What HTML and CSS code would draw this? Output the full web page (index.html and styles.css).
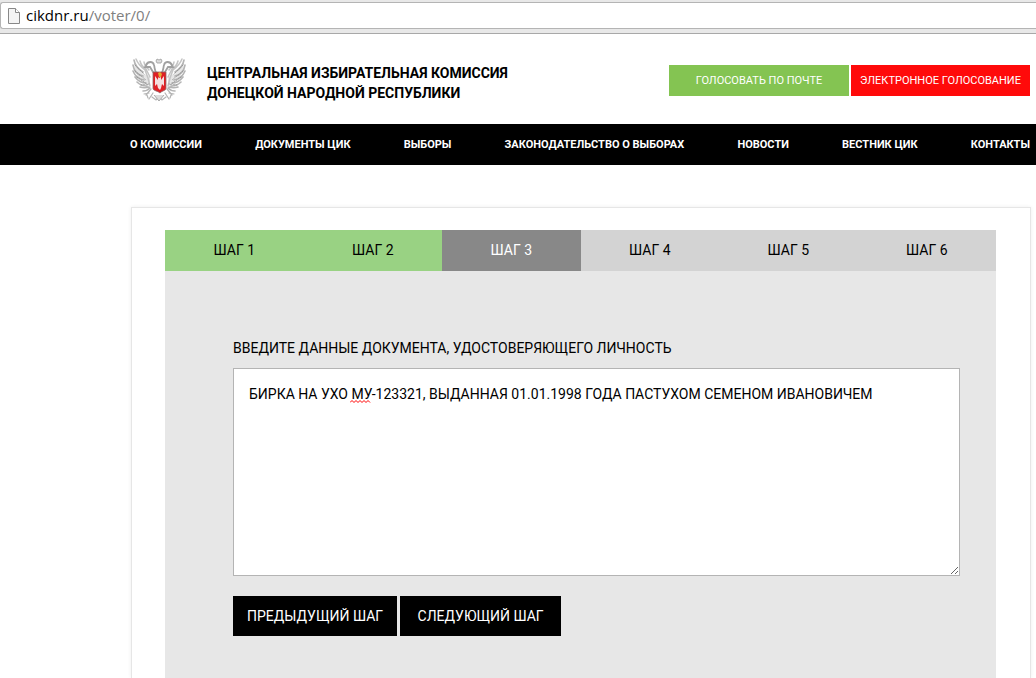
FILE: index.html
```
<!DOCTYPE html>
<html lang="ru">
<head>
  <meta charset="utf-8">
  <meta name="viewport" content="width=device-width">
  <title>ЦИК ДНР</title>
  <link rel="stylesheet" href="styles.css">
</head>
<body>
  <div class="browser-bar">
    <div class="address">
      <svg class="page-icon" width="12" height="16" viewBox="0 0 12 16" aria-hidden="true">
        <path d="M.5 .5h7l4 4v11H.5z" fill="#f4f4f4" stroke="#888"/>
        <path d="M7.500 .5v4h4" fill="#fff" stroke="#888"/>
      </svg>
      <span class="url"><span class="host">cikdnr.ru</span>/voter/0/</span>
    </div>
  </div>

  <header class="header">
    <div class="brand">
      <svg class="emblem" width="54" height="46" viewBox="0 0 54 46" aria-hidden="true">
        <g id="wing" fill="none" stroke="#b4b4b4" stroke-linecap="round">
          <path d="M18 28C9 27 3 20 2 4c3 8 9 13 16 16z" fill="#e6e6e6" stroke="none"/>
          <path d="M2 3c1 6 4 9 9 12M1 8c1 6 5 10 10 11M1 14c2 5 6 8 11 9M3 20c3 4 6 6 11 6M5 25c3 3 6 4 10 4M8 30c3 1 6 1 9 0M11 34c3 0 5-1 7-3" stroke-width="1.600"/>
          <path d="M4 2c2 5 5 8 9 11l3 8 2 8M8 4c1 4 3 6 6 8l4 8M12 5c0 4 3 5 5 8" stroke="#c4c4c4" stroke-width="1.500"/>
          <path d="M3 8l9 9M3 14l11 9M5 20l11 8M9 28l8-1" stroke="#888" stroke-width=".7" stroke-dasharray="1 1.500"/>
          <path d="M14 8c2-4 7-4 8 0 1 3 0 5 3 9M15 7l-2 3 5 0 3 5" stroke="#a0a0a0" stroke-width="1.800"/>
          <path d="M19 32l-5 6M17 36l-5 1M15 38l1 3M21 36l-4 6M20 40l4 3 3-4" stroke="#b4b4b4" stroke-width="1.200"/>
        </g>
        <use href="#wing" transform="translate(54 0) scale(-1 1)"/>
        <path d="M24 4l1-2 2 1 2-1 1 2-1 2h-4z" fill="#ddd" stroke="#999" stroke-width=".8"/>
        <path d="M22 38l5 6 5-6" fill="#ddd" stroke="#aaa"/>
        <path d="M21 15h13v16c0 3-3 2-6 5-4-3-7-2-7-5z" fill="#e01f24" stroke="#8b6b6b" stroke-width=".8"/>
        <path d="M23 19l3 4v-3l1 1 2-1v3l3-4v10l-2-2-1 4-1 2-2-2-1-4-2 2z" fill="#f4dede"/>
        <path d="M26 16l2-1 2 2-1 3h-2z" fill="#e2a832"/>
      </svg>
      <div class="brand-name">ЦЕНТРАЛЬНАЯ ИЗБИРАТЕЛЬНАЯ КОМИССИЯ<br>ДОНЕЦКОЙ НАРОДНОЙ РЕСПУБЛИКИ</div>
    </div>
    <div class="vote-links">
      <a class="vote-link vote-mail" href="#">ГОЛОСОВАТЬ ПО ПОЧТЕ</a>
      <a class="vote-link vote-online" href="#">ЭЛЕКТРОННОЕ ГОЛОСОВАНИЕ</a>
    </div>
  </header>

  <nav class="nav">
    <a href="#">О КОМИССИИ</a>
    <a href="#">ДОКУМЕНТЫ ЦИК</a>
    <a href="#">ВЫБОРЫ</a>
    <a href="#">ЗАКОНОДАТЕЛЬСТВО О ВЫБОРАХ</a>
    <a href="#">НОВОСТИ</a>
    <a href="#">ВЕСТНИК ЦИК</a>
    <a href="#">КОНТАКТЫ</a>
  </nav>

  <main class="card">
    <ol class="steps">
      <li class="done">ШАГ 1</li>
      <li class="done">ШАГ 2</li>
      <li class="current">ШАГ 3</li>
      <li>ШАГ 4</li>
      <li>ШАГ 5</li>
      <li>ШАГ 6</li>
    </ol>
    <form class="panel">
      <label for="document">ВВЕДИТЕ ДАННЫЕ ДОКУМЕНТА, УДОСТОВЕРЯЮЩЕГО ЛИЧНОСТЬ</label>
      <div class="field">
        <textarea id="document" spellcheck="false">БИРКА НА УХО МУ-123321, ВЫДАННАЯ 01.01.1998 ГОДА ПАСТУХОМ СЕМЕНОМ ИВАНОВИЧЕМ</textarea>
        <svg class="squiggle" width="22" height="3" viewBox="0 0 22 3" aria-hidden="true">
          <path d="M0 2.500l2-2 2 2 2-2 2 2 2-2 2 2 2-2 2 2 2-2 2 2" fill="none" stroke="#f00"/>
        </svg>
      </div>
      <div class="button-group">
        <button type="button">ПРЕДЫДУЩИЙ ШАГ</button>
        <button type="submit">СЛЕДУЮЩИЙ ШАГ</button>
      </div>
    </form>
  </main>
</body>
</html>
```
FILE: styles.css
```
* {
  box-sizing: border-box;
}

body {
  display: flex;
  flex-direction: column;
  min-height: 100vh;
  margin: 0;
  background-color: #fff;
  color: #000;
  font-family: Roboto, sans-serif;
  font-size: 14px;
}

a {
  color: #fff;
  text-decoration: none;
}

.browser-bar {
  padding: 2px 0 4px;
  background-color: #e8e8e8;
  border-bottom: 1px solid #a8a8a8;
}

.address {
  display: flex;
  align-items: center;
  gap: 6px;
  height: 27px;
  padding-left: 7px;
  background-color: #fff;
  border: 1px solid #b4b4b4;
  border-right: 0;
  border-radius: 3px 0 0 3px;
}

.url {
  color: #808080;
  font-family: "Open Sans", sans-serif;
  font-size: 15px;
  line-height: 20px;
  padding-bottom: 2px;
}

.host {
  color: #000;
}

.header {
  display: flex;
  justify-content: space-between;
  padding: 23px 6px 21px 132px;
}

.brand {
  display: flex;
  gap: 21px;
}

.brand-name {
  padding-top: 6px;
  font-weight: bold;
  line-height: 20px;
}

.vote-links {
  display: flex;
  gap: 2px;
  padding-top: 8px;
}

.vote-link {
  min-width: 179px;
  height: 31px;
  font-size: 11px;
  line-height: 31px;
  text-align: center;
  white-space: nowrap;
}

.vote-mail {
  min-width: 180px;
  background-color: #84c452;
}

.vote-online {
  background-color: #ff0a0a;
}

.nav {
  display: flex;
  justify-content: space-between;
  padding: 0 6px 0 130px;
  background-color: #000;
  font-size: 11px;
  font-weight: bold;
  line-height: 41px;
}

.card {
  display: flex;
  flex-direction: column;
  flex-grow: 1;
  margin: 42px 5px 0 131px;
  padding: 22px 34px 0 33px;
  border: 1px solid #e6e6e6;
  border-bottom: 0;
  box-shadow: 0 0 4px #eee;
}

.steps {
  display: flex;
  margin: 0;
  padding: 0;
  list-style: none;
}

.steps li {
  flex: 1;
  background-color: #d3d3d3;
  line-height: 41px;
  text-align: center;
}

.steps .done {
  background-color: #99d283;
}

.steps .current {
  background-color: #888;
  color: #fff;
}

.panel {
  flex-grow: 1;
  padding: 67px 36px 42px 68px;
  background-color: #e7e7e7;
}

.panel label {
  display: block;
  line-height: 20px;
}

.field {
  position: relative;
  margin-top: 10px;
}

textarea {
  display: block;
  width: 100%;
  height: 208px;
  padding: 15px;
  border: 1px solid #b4b4b4;
  font: inherit;
  line-height: 20px;
}

/* spelling mark under the typed text */
.squiggle {
  position: absolute;
  top: 32px;
  left: 117px;
}

.button-group {
  display: flex;
  gap: 3px;
  margin-top: 20px;
}

button {
  min-width: 161px;
  height: 40px;
  padding: 0 14px;
  border: 0;
  background-color: #000;
  color: #fff;
  font: inherit;
}
```
